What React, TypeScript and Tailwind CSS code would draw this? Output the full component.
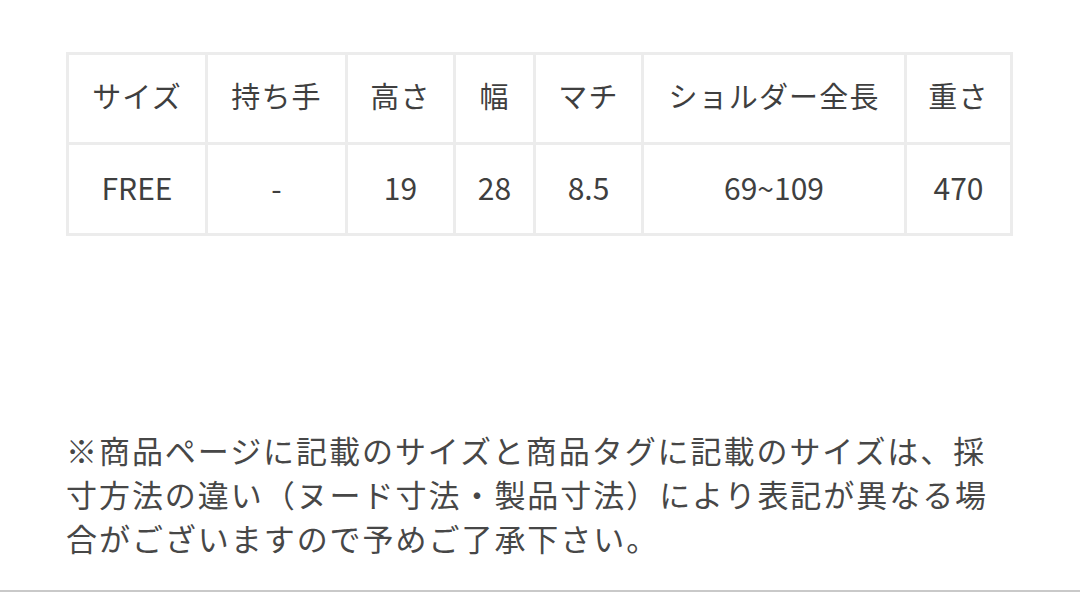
import React from 'react';

const headers = ['サイズ', '持ち手', '高さ', '幅', 'マチ', 'ショルダー全長', '重さ'];
const values = ['FREE', '-', '19', '28', '8.5', '69~109', '470'];
const widths = ['w-[139px]', 'w-[140px]', 'w-[108px]', 'w-[80px]', 'w-[108px]', 'w-[263px]', 'w-[106px]'];

export default function App() {
  return (
    <div
      className="w-[1080px] h-[592px] bg-white text-[#3f3f3f] flex flex-col"
      style={{ fontFamily: '"Noto Sans CJK JP", "Noto Sans", sans-serif' }}
    >
      <div className="px-[66px] pt-[52px] flex-1">
        <table className="w-[944px] table-fixed border-collapse">
          <colgroup>
            {widths.map((w, i) => (
              <col key={i} className={w} />
            ))}
          </colgroup>
          <tbody>
            <tr className="h-[90px]">
              {headers.map((h) => (
                <td key={h} className="border-[3px] border-[#ececec] pb-[5px] text-center text-[29px] font-normal tracking-[0.04em] whitespace-nowrap">
                  {h}
                </td>
              ))}
            </tr>
            <tr className="h-[91px]">
              {values.map((v, i) => (
                <td key={i} className="border-[3px] border-[#ececec] pb-[4px] text-center text-[30px] whitespace-nowrap">
                  {v}
                </td>
              ))}
            </tr>
          </tbody>
        </table>

        <p className="mt-[192px] w-[940px] text-[31px] leading-[44px] tracking-[0.063em] text-[#474747]">
          ※商品ページに記載のサイズと商品タグに記載のサイズは、採寸方法の違い（ヌード寸法・製品寸法）により表記が異なる場合がございますので予めご了承下さい。
        </p>
      </div>
      <div className="h-[2px] bg-[#c9c9c9]" />
    </div>
  );
}
